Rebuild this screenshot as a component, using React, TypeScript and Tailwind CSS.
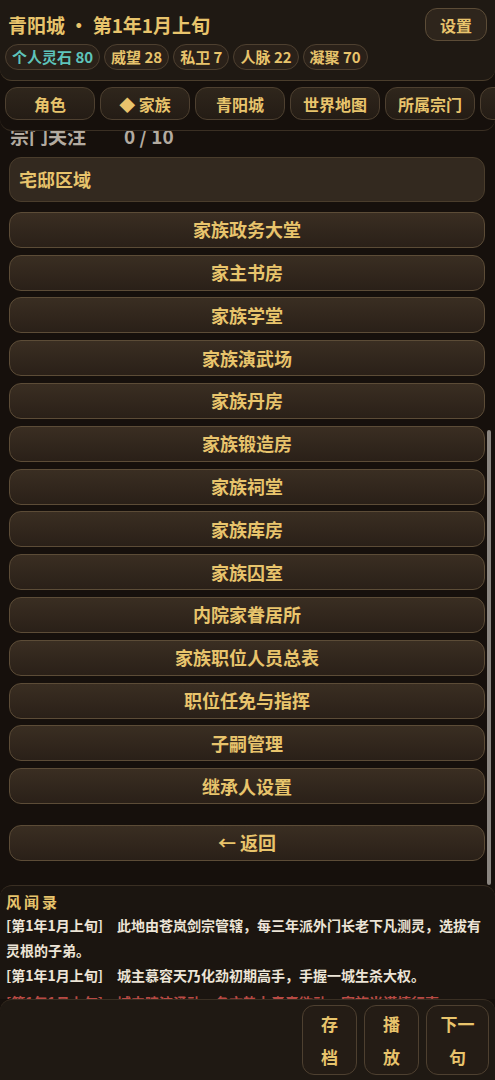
import React from "react";

const font = { fontFamily: '"Noto Sans CJK SC", "Noto Sans", sans-serif' };

const stats = [
  { label: "个人灵石 80", teal: true },
  { label: "威望 28" },
  { label: "私卫 7" },
  { label: "人脉 22" },
  { label: "凝聚 70" },
];

const tabs = ["角色", "◆ 家族", "青阳城", "世界地图", "所属宗门", "设置"];

const rooms = [
  "家族政务大堂",
  "家主书房",
  "家族学堂",
  "家族演武场",
  "家族丹房",
  "家族锻造房",
  "家族祠堂",
  "家族库房",
  "家族囚室",
  "内院家眷居所",
  "家族职位人员总表",
  "职位任免与指挥",
  "子嗣管理",
  "继承人设置",
];

function RoomButton({ children }: { children: React.ReactNode }) {
  return (
    <button className="h-[36px] w-full shrink-0 rounded-xl border border-[#5c4c37] bg-gradient-to-b from-[#3a2e22] to-[#2a2018] text-[18px] font-bold text-[#e8c46c]">
      {children}
    </button>
  );
}

export default function App() {
  return (
    <div style={font} className="flex h-[1080px] w-full flex-col overflow-hidden bg-[#16100c] text-[#e8c46c]">
      {/* 顶部 */}
      <div className="h-[81px] shrink-0 rounded-b-xl border-b border-[#4a3d2c] bg-[#1f1913] px-[8px] pt-[8px]">
        <div className="flex items-center justify-between">
          <h1 className="text-[19px] font-bold leading-[32px]">青阳城 · 第1年1月上旬</h1>
          <button className="h-[33px] w-[62px] rounded-xl border border-[#5c4c37] bg-[#2e251c] text-[16px] font-bold">
            设置
          </button>
        </div>
        <div className="mt-[3px] flex gap-[4px] -ml-[3px]">
          {stats.map((s) => (
            <span
              key={s.label}
              className={
                "flex h-[26px] items-center rounded-full border border-[#4e4030] bg-[#2a2119] px-[6px] text-[15px] font-bold " +
                (s.teal ? "text-[#5ec4bb]" : "text-[#e8c46c]")
              }
            >
              {s.label}
            </span>
          ))}
        </div>
      </div>

      {/* 导航 */}
      <div className="flex h-[50px] shrink-0 gap-[5px] overflow-hidden rounded-b-xl border-b border-[#3a2f23] px-[5px] pt-[6px]">
        {tabs.map((t) => (
          <button
            key={t}
            className="h-[33px] w-[90px] shrink-0 rounded-xl border border-[#4e4030] bg-gradient-to-b from-[#2f261c] to-[#241c15] text-[16px] font-bold"
          >
            {t}
          </button>
        ))}
      </div>

      {/* 主体 */}
      <div className="relative flex-1 overflow-hidden">
        <div className="-mt-[9px] flex gap-[38px] px-[10px] text-[19px] font-bold leading-[28px] text-[#b3aba0]">
          <span>宗门关注</span>
          <span>0 / 10</span>
        </div>
        <div className="flex flex-col gap-[6.8px] px-[9px] pr-[10px]">
          <div className="mt-[7px] mb-[3px] flex h-[45px] items-center rounded-xl border border-[#4a3d2c] bg-[#33291f] px-[9px] text-[18px] font-bold">
            宅邸区域
          </div>
          {rooms.map((r) => (
            <RoomButton key={r}>{r}</RoomButton>
          ))}
          <div className="mt-[14px]">
            <RoomButton>← 返回</RoomButton>
          </div>
        </div>
        <div className="absolute right-[4px] top-[299px] h-[455px] w-[4px] rounded-full bg-[#8a8580]" />
      </div>

      {/* 风闻录 */}
      <div className="h-[114px] shrink-0 overflow-hidden rounded-t-xl border-t border-[#3a2f23] bg-[#1b1510] px-[6px] pt-[5px]">
        <div className="text-[15px] font-bold leading-[22px] tracking-[3px]">风闻录</div>
        <div className="text-[14px] font-bold leading-[25px] text-[#ece4d6]">
          <p>[第1年1月上旬]　此地由苍岚剑宗管辖，每三年派外门长老下凡测灵，选拔有灵根的子弟。</p>
          <p>[第1年1月上旬]　城主慕容天乃化劲初期高手，手握一城生杀大权。</p>
          <p className="mt-[2px] text-[#b84a44]">[第1年1月上旬]　城中暗流涌动，各方势力蠢蠢欲动，家族当谨慎行事。</p>
        </div>
      </div>

      {/* 底栏 */}
      <div className="flex h-[81px] shrink-0 justify-end gap-[7px] rounded-t-xl border-t border-[#3a2f23] bg-[#1f1913] px-[6px] pt-[5px]">
        {[["存", "档", "w-[55px]"], ["播", "放", "w-[55px]"], ["下一", "句", "w-[63px]"]].map(([a, b, w]) => (
          <button
            key={a}
            className={
              "flex h-[70px] flex-col items-center justify-center rounded-xl border border-[#4e4030] bg-[#241c15] text-[17px] font-bold leading-[33px] " +
              w
            }
          >
            <span>{a}</span>
            <span>{b}</span>
          </button>
        ))}
      </div>
    </div>
  );
}
